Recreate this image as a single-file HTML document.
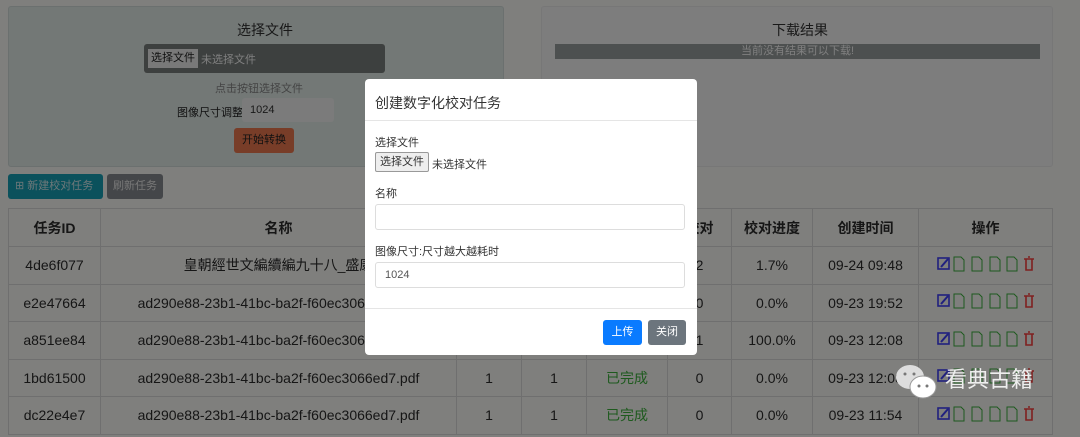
<!DOCTYPE html>
<html><head><meta charset="utf-8"><style>
*{box-sizing:border-box;margin:0;padding:0}
html,body{width:1080px;height:437px;overflow:hidden;background:#fefefa}
body{font-family:"Liberation Sans","Noto Sans CJK SC",sans-serif;position:relative;color:#222}
.abs{position:absolute}
.card1{left:8px;top:6px;width:496px;height:161px;background:#e6f0ed;border:1px solid #d6e0de;border-radius:3px}
.card2{left:541px;top:6px;width:512px;height:161px;background:#fafafa;border:1px solid #eee;border-radius:3px}
table{position:absolute;left:8px;top:208px;border-collapse:collapse;font-size:14px;color:#2c2c2c}
td,th{border:1px solid #dedede;text-align:center;height:37.5px;padding:0}
th{font-weight:bold;font-size:14px;height:38px}
.g{color:#3cb43c}
.backdrop{left:0;top:0;width:1080px;height:437px;background:rgba(0,0,0,0.5)}
.modal{left:365px;top:79px;width:332px;height:276px;background:#fff;border-radius:4px;font-size:11px;color:#333}
input.f{position:absolute;left:10px;width:310px;height:26px;border:1px solid #ddd;border-radius:3px;font-size:11px;padding-left:9px;color:#555;background:#fff}
</style></head><body>
<div class="abs card1"></div>
<div class="abs" style="left:237px;top:20px;font-size:14px;color:#333">选择文件</div>
<div class="abs" style="left:144px;top:44px;width:241px;height:29px;background:#7b807e;border-radius:3px"></div>
<div class="abs" style="left:148px;top:49px;width:50px;height:19px;background:#f2f2f2;font-size:11px;line-height:19px;text-align:center;color:#222">选择文件</div>
<div class="abs" style="left:201px;top:51px;font-size:11px;color:#fff">未选择文件</div>
<div class="abs" style="left:215px;top:80px;font-size:11px;color:#888">点击按钮选择文件</div>
<div class="abs" style="left:177px;top:104px;font-size:11px;color:#222">图像尺寸调整</div>
<div class="abs" style="left:242px;top:98px;width:92px;height:24px;background:#f6f6f6;border-radius:3px;font-size:11px;line-height:24px;padding-left:8px;color:#333">1024</div>
<div class="abs" style="left:234px;top:128px;width:60px;height:25px;background:#f07a50;border-radius:3px;font-size:11px;line-height:25px;text-align:center;color:#222">开始转换</div>
<div class="abs card2"></div>
<div class="abs" style="left:772px;top:20px;font-size:14px;color:#333">下载结果</div>
<div class="abs" style="left:555px;top:44px;width:485px;height:15px;background:#9aa0a0;font-size:11px;line-height:15px;text-align:center;color:#fff">当前没有结果可以下载!</div>
<div class="abs" style="left:8px;top:174px;width:95px;height:25px;background:#17a2b8;border-radius:3px;font-size:11px;line-height:25px;color:#d6eef2;padding-left:7px">⊞ 新建校对任务</div>
<div class="abs" style="left:107px;top:174px;width:56px;height:25px;background:#888c92;border-radius:3px;font-size:11px;line-height:25px;text-align:center;color:#eee">刷新任务</div>
<table>
<tr><th style="width:92px">任务ID</th><th style="width:356px">名称</th><th style="width:65px"></th><th style="width:65px"></th><th style="width:81px"></th><th style="width:64px">校对</th><th style="width:81px">校对进度</th><th style="width:106px">创建时间</th><th style="width:134px">操作</th></tr>
<tr><td>4de6f077</td><td>皇朝經世文編續編九十八_盛康</td><td></td><td></td><td></td><td>2</td><td>1.7%</td><td>09-24 09:48</td><td class="ops"></td></tr>
<tr><td>e2e47664</td><td>ad290e88-23b1-41bc-ba2f-f60ec3066ed7.pdf</td><td></td><td></td><td></td><td>0</td><td>0.0%</td><td>09-23 19:52</td><td class="ops"></td></tr>
<tr><td>a851ee84</td><td>ad290e88-23b1-41bc-ba2f-f60ec3066ed7.pdf</td><td></td><td></td><td></td><td>1</td><td>100.0%</td><td>09-23 12:08</td><td class="ops"></td></tr>
<tr><td>1bd61500</td><td>ad290e88-23b1-41bc-ba2f-f60ec3066ed7.pdf</td><td>1</td><td>1</td><td class="g">已完成</td><td>0</td><td>0.0%</td><td>09-23 12:08</td><td class="ops"></td></tr>
<tr><td>dc22e4e7</td><td>ad290e88-23b1-41bc-ba2f-f60ec3066ed7.pdf</td><td>1</td><td>1</td><td class="g">已完成</td><td>0</td><td>0.0%</td><td>09-23 11:54</td><td class="ops"></td></tr>
</table>
<div class="abs backdrop"></div>
<div class="abs" style="left:893px;top:360px;width:200px;height:40px;color:#eee;font-size:22px;line-height:40px;padding-left:52px">看典古籍</div>
<svg class="abs" style="left:893px;top:362px" width="50" height="40"><ellipse cx="17" cy="15" rx="14" ry="12" fill="#ddd"/><ellipse cx="30" cy="25" rx="13" ry="11" fill="#fff" stroke="#999"/><circle cx="12" cy="12" r="1.5" fill="#777"/><circle cx="21" cy="12" r="1.5" fill="#777"/><circle cx="26" cy="24" r="1.5" fill="#777"/><circle cx="34" cy="24" r="1.5" fill="#777"/></svg>
<div class="abs modal">
<div style="padding:14px 10px;font-size:14px;color:#333;border-bottom:1px solid #e5e5e5;height:42px">创建数字化校对任务</div>
<div class="abs" style="left:10px;top:55px">选择文件</div>
<div class="abs" style="left:10px;top:73px;width:54px;height:20px;border:1px solid #999;border-radius:2px;background:#eee;line-height:18px;text-align:center">选择文件</div>
<div class="abs" style="left:67px;top:77px">未选择文件</div>
<div class="abs" style="left:10px;top:106px">名称</div>
<input class="f" style="top:125px">
<div class="abs" style="left:10px;top:164px">图像尺寸:尺寸越大越耗时</div>
<input class="f" style="top:183px" value="1024">
<div class="abs" style="left:0;top:229px;width:332px;border-top:1px solid #e5e5e5"></div>
<div class="abs" style="left:238px;top:241px;width:39px;height:25px;background:#0a7bff;border-radius:3px;color:#fff;line-height:25px;text-align:center">上传</div>
<div class="abs" style="left:283px;top:241px;width:38px;height:25px;background:#6c757d;border-radius:3px;color:#fff;line-height:25px;text-align:center">关闭</div>
</div>
<script>
document.querySelectorAll('.ops').forEach(function(t){t.innerHTML='<svg width="100" height="16" viewBox="0 0 100 16"><rect x="2" y="2" width="11" height="11" fill="none" stroke="#4040ff" stroke-width="1.6"/><path d="M5 11l7-8" stroke="#4040ff" stroke-width="2"/>'+[18,36,54,71].map(function(x){return '<path d="M'+x+' 1h7l3 3v11h-10z" fill="none" stroke="#3cb43c" stroke-width="1"/>'}).join('')+'<path d="M88 3h10M90 3v11h6v-11M92 1h2" fill="none" stroke="#ff4040" stroke-width="1.6"/></svg>'});
</script>
</body></html>
